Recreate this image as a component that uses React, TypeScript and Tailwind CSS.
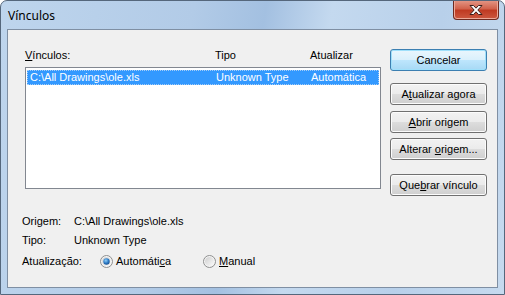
import React from 'react'

const font = { fontFamily: '"Liberation Sans", Arial, sans-serif' }

function WinButton({ children, isDefault = false, className = '' }: { children: React.ReactNode; isDefault?: boolean; className?: string }) {
  return (
    <div
      className={`h-[22px] w-[97px] rounded-[3px] border flex items-center justify-center text-[11px] text-black ${
        isDefault
          ? 'border-[#3c7fb1] bg-[linear-gradient(#eaf6fd_0%,#d9f0fc_50%,#bee6fd_50%,#a7d9f5_100%)] shadow-[inset_0_0_0_1px_#9fe0fb]'
          : 'border-[#707070] bg-[linear-gradient(#f2f2f2_0%,#ebebeb_50%,#dddddd_50%,#cfcfcf_100%)] shadow-[inset_0_0_0_1px_#fcfcfc]'
      } ${className}`}
    >
      {children}
    </div>
  )
}

function Radio({ checked }: { checked: boolean }) {
  return (
    <svg width="13" height="13" viewBox="0 0 13 13">
      <defs>
        <linearGradient id={checked ? 'rg1' : 'rg0'} x1="0" y1="0" x2="1" y2="1">
          <stop offset="0" stopColor="#cfcfcf" />
          <stop offset="1" stopColor="#fbfbfb" />
        </linearGradient>
        <radialGradient id="dot" cx="0.4" cy="0.35" r="0.7">
          <stop offset="0" stopColor="#8fd0fa" />
          <stop offset="0.6" stopColor="#2a77c2" />
          <stop offset="1" stopColor="#1a4f8c" />
        </radialGradient>
      </defs>
      <circle cx="6.5" cy="6.5" r="6" fill="#f4f4f4" stroke="#8e8f8f" strokeWidth="1" />
      <circle cx="6.5" cy="6.5" r="4.5" fill={`url(#${checked ? 'rg1' : 'rg0'})`} />
      {checked && <circle cx="6.5" cy="6.5" r="3.2" fill="url(#dot)" />}
    </svg>
  )
}

export default function App() {
  return (
    <div
      className="w-[505px] h-[295px] flex flex-col rounded-t-[7px] border border-[#55677c] bg-[linear-gradient(100deg,#bed5ed_0%,#b2cbe7_35%,#a3c0e1_48%,#c4d9ef_60%,#b8d0ea_80%,#c6daef_100%)] overflow-hidden"
      style={font}
    >
      {/* Title bar */}
      <div className="h-[28px] flex items-start justify-between shrink-0">
        <div
          className="pl-[7px] pt-[6px] text-[12px] text-black"
          style={{ fontFamily: '"Noto Sans", "Open Sans", sans-serif' }}
        >
          Vínculos
        </div>
        <div className="mr-[5px] -mt-[1px] w-[46px] h-[20px] rounded-b-[4px] border border-[#6e2a20] border-t-0 bg-[linear-gradient(#e59a89_0%,#d2634d_45%,#bf3a22_55%,#cc5840_100%)] shadow-[inset_0_0_0_1px_#eca999] flex items-center justify-center">
          <svg width="16" height="12" viewBox="0 0 16 12">
            <path
              d="M2 1.5 H5.5 L8 4.2 L10.5 1.5 H14 L9.8 6 L14 10.5 H10.5 L8 7.8 L5.5 10.5 H2 L6.2 6 Z"
              fill="#ffffff"
              stroke="#3b1e1a"
              strokeWidth="1"
              strokeLinejoin="round"
            />
          </svg>
        </div>
      </div>

      {/* Client area */}
      <div className="mx-[6px] mb-[6px] flex-1 border border-[#7f8fa3] bg-[#f0f0f0] flex flex-col text-[11px] text-black">
        <div className="flex pt-[19px] pl-[17px] h-[167px] shrink-0">
          <div className="flex flex-col w-[356px]">
            <div className="relative h-[13px] leading-[13px]">
              <span className="absolute left-0">
                <span className="underline">V</span>ínculos:
              </span>
              <span className="absolute left-[190px]">Tipo</span>
              <span className="absolute left-[285px]">Atualizar</span>
            </div>
            <div className="mt-[5px] h-[122px] border border-[#828790] bg-white p-[1px]">
              <div className="mt-[1px] h-[15px] bg-[#3399ff] border border-dotted border-[#a5cdf7] flex items-center text-white leading-[13px]">
                <span className="w-[188px] pl-[2px]">C:\All Drawings\ole.xls</span>
                <span className="w-[95px]">Unknown Type</span>
                <span>Automática</span>
              </div>
            </div>
          </div>
          <div className="ml-[9px] flex flex-col">
            <WinButton isDefault>Cancelar</WinButton>
            <WinButton className="mt-[12px]">
              <span>
                A<span className="underline">t</span>ualizar agora
              </span>
            </WinButton>
            <WinButton className="mt-[6px]">
              <span>
                <span className="underline">A</span>brir origem
              </span>
            </WinButton>
            <WinButton className="mt-[5px]">
              <span>
                Alterar <span className="underline">o</span>rigem...
              </span>
            </WinButton>
            <WinButton className="mt-[14px]">
              <span>
                Que<span className="underline">b</span>rar vínculo
              </span>
            </WinButton>
          </div>
        </div>

        <div className="mt-[18px] pl-[14px] flex flex-col leading-[13px]">
          <div className="flex">
            <span className="w-[52px]">Origem:</span>
            <span>C:\All Drawings\ole.xls</span>
          </div>
          <div className="flex mt-[6px]">
            <span className="w-[52px]">Tipo:</span>
            <span>Unknown Type</span>
          </div>
          <div className="flex items-center mt-[8px]">
            <span className="w-[78px]">Atualização:</span>
            <Radio checked />
            <span className="ml-[3px] w-[87px]">
              Automáti<span className="underline">c</span>a
            </span>
            <Radio checked={false} />
            <span className="ml-[3px]">
              <span className="underline">M</span>anual
            </span>
          </div>
        </div>
      </div>
    </div>
  )
}
